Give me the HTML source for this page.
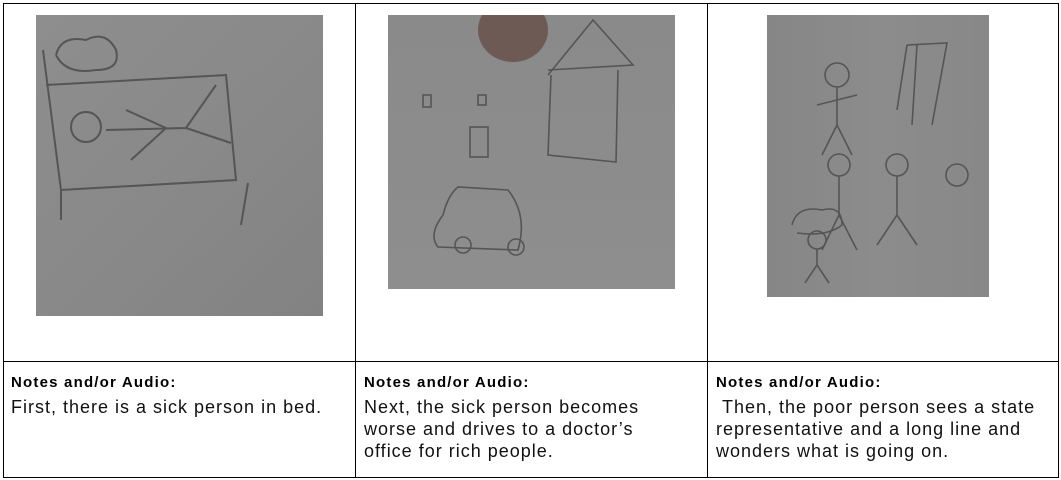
<!DOCTYPE html>
<html><head><meta charset="utf-8"><style>
html,body{margin:0;padding:0;background:#fff;width:1061px;height:480px;overflow:hidden}
.b{position:absolute;background:#000}
.img{position:absolute;background:#8b8b8b}
.img svg{position:absolute;left:0;top:0}
.t{position:absolute;font-family:"Liberation Sans",sans-serif;color:#000;white-space:nowrap}
.l{font-size:15px;font-weight:bold;letter-spacing:1.2px}
.p{font-size:18px;line-height:22px;color:#111;letter-spacing:1px}
</style></head><body>
<div class="b" style="left:3px;top:3px;width:1056px;height:1px"></div>
<div class="b" style="left:3px;top:361px;width:1056px;height:1px"></div>
<div class="b" style="left:3px;top:477px;width:1056px;height:1px"></div>
<div class="b" style="left:3px;top:3px;width:1px;height:475px"></div>
<div class="b" style="left:355px;top:3px;width:1px;height:475px"></div>
<div class="b" style="left:707px;top:3px;width:1px;height:475px"></div>
<div class="b" style="left:1058px;top:3px;width:1px;height:475px"></div>

<div class="img" style="left:36px;top:15px;width:287px;height:301px;background:linear-gradient(135deg,#8e8e8e,#888 60%,#828282)">
<svg width="287" height="301" fill="none" stroke="#555" stroke-width="2">
<path d="M7 35 L25 175 L200 165 L190 60 L10 70"/><path d="M25 175 L25 205 M212 168 L205 210"/>
<circle cx="50" cy="112" r="15"/><path d="M70 115 L150 113 M90 95 L130 113 L95 145 M150 113 L180 70 M150 113 L195 128"/>
<path d="M20 40 Q25 20 50 25 Q70 15 80 35 Q85 55 60 55 Q30 60 20 40"/>
</svg></div>

<div class="img" style="left:388px;top:15px;width:287px;height:274px;background:linear-gradient(180deg,#8a8a8a,#8e8e8e)">
<svg width="287" height="274" fill="none" stroke="#555" stroke-width="1.6">
<path d="M160 60 L205 5 L245 50 L160 55 M163 60 L160 140 L228 147 L230 55"/>
<rect x="35" y="80" width="8" height="12"/><rect x="90" y="80" width="8" height="10"/><rect x="82" y="112" width="18" height="30"/>
<path d="M55 200 Q40 220 50 232 L130 235 Q140 200 120 175 L70 172 Q60 180 55 200"/>
<circle cx="75" cy="230" r="8"/><circle cx="128" cy="232" r="8"/>
<ellipse cx="125" cy="15" rx="35" ry="32" fill="#5a3a30" stroke="none" opacity=".6"/>
</svg></div>

<div class="img" style="left:767px;top:15px;width:222px;height:282px;background:linear-gradient(90deg,#868686,#8c8c8c 50%,#888)">
<svg width="222" height="282" fill="none" stroke="#555" stroke-width="1.6">
<circle cx="70" cy="60" r="12"/><path d="M70 72 L70 110 L55 140 M70 110 L85 140 M50 90 L90 80"/>
<path d="M140 30 L130 95 M150 30 L145 110 M140 30 L180 28 L165 110"/>
<circle cx="72" cy="150" r="11"/><circle cx="130" cy="150" r="11"/><circle cx="190" cy="160" r="11"/>
<path d="M72 161 L72 200 L55 235 M72 200 L90 235 M130 161 L130 200 L110 230 M130 200 L150 230"/>
<circle cx="50" cy="225" r="9"/><path d="M50 234 L50 250 L38 268 M50 250 L62 268"/>
<path d="M25 210 Q30 190 55 195 Q75 190 75 210 Q60 222 30 218"/>
</svg></div>

<div class="t l" style="left:11px;top:374px">Notes and/or Audio:</div>
<div class="t p" style="left:11px;top:396px">First, there is a sick person in bed.</div>
<div class="t l" style="left:364px;top:374px">Notes and/or Audio:</div>
<div class="t p" style="left:364px;top:396px">Next, the sick person becomes<br>worse and drives to a doctor’s<br>office for rich people.</div>
<div class="t l" style="left:716px;top:374px">Notes and/or Audio:</div>
<div class="t p" style="left:716px;top:396px">&nbsp;Then, the poor person sees a state<br>representative and a long line and<br>wonders what is going on.</div>
</body></html>
